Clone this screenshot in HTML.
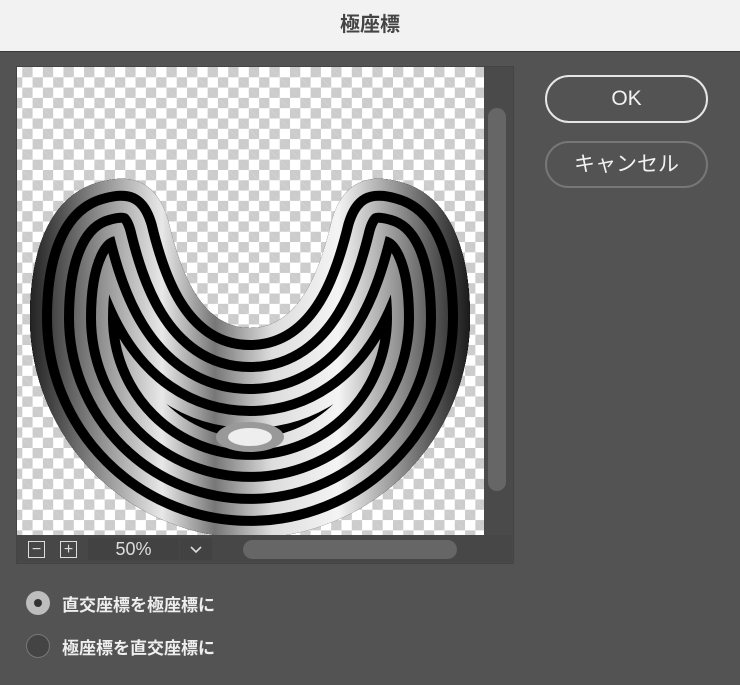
<!DOCTYPE html>
<html><head><meta charset="utf-8"><style>
body{margin:0;width:740px;height:685px;background:#535353;overflow:hidden;font-family:"Liberation Sans","Noto Sans CJK JP",sans-serif;position:relative}
.title{position:absolute;left:0;top:0;width:740px;height:51px;background:#f3f2f2;border-bottom:1px solid #3a3a3a;text-align:center;line-height:50px;font-size:20px;font-weight:bold;color:#444}
.panel{position:absolute;left:16px;top:66px;width:496px;height:496px;border:1px solid #444;background:#4a4a4a}
.img{position:absolute;left:17px;top:67px;width:467px;height:468px;overflow:hidden;
background-color:#fff;background-image:linear-gradient(45deg,#ccc 25%,transparent 25%,transparent 75%,#ccc 75%),linear-gradient(45deg,#ccc 25%,transparent 25%,transparent 75%,#ccc 75%);background-size:20.6px 20.6px;background-position:-5px 0,5.3px 10.3px}
.vs{position:absolute;left:488px;top:108px;width:18px;height:383px;border-radius:9px;background:#666}
.bar{position:absolute;left:17px;top:535px;width:495px;height:27px;background:#474747}
.bx{position:absolute;top:541px;width:17px;height:17px;border:1.5px solid #ddd;color:#ddd;font-size:16px;line-height:16px;text-align:center;box-sizing:border-box}
.pct{position:absolute;left:88px;top:538px;width:91px;height:22px;background:#424242;color:#ddd;font-size:18px;line-height:22px;text-align:center}
.dd{position:absolute;left:180px;top:538px;width:32px;height:22px;background:#424242}
.hs{position:absolute;left:243px;top:540px;width:214px;height:19px;border-radius:10px;background:#666}
.btn{position:absolute;left:545px;width:163px;border-radius:24px;box-sizing:border-box;text-align:center;color:#f2f2f2;font-size:21px}
.rad{position:absolute;left:26px;width:24px;height:24px;border-radius:50%;box-sizing:border-box}
.lbl{position:absolute;left:62px;color:#eee;font-size:17px;font-weight:bold}
</style></head><body>
<div class="title">極座標</div>
<div class="panel"></div>
<div class="img">
<svg width="467" height="468" viewBox="17 67 467 468">
<defs>
<linearGradient id="g" x1="30" x2="470" y1="0" y2="0" gradientUnits="userSpaceOnUse">
<stop offset="0" stop-color="#222"/><stop offset="0.15" stop-color="#888"/><stop offset="0.3" stop-color="#e8e8e8"/><stop offset="0.42" stop-color="#777"/><stop offset="0.55" stop-color="#ddd"/><stop offset="0.7" stop-color="#f4f4f4"/><stop offset="0.85" stop-color="#888"/><stop offset="1" stop-color="#1a1a1a"/>
</linearGradient>
<path id="s" d="M30,318 A220,220 0 0 0 470,318 C470,250 450,195 400,182 C365,172 342,185 332,220 C320,270 300,328 250,328 C200,328 180,270 168,220 C158,185 135,172 100,182 C50,195 30,250 30,318 Z"/>
<clipPath id="c"><use href="#s"/></clipPath>
</defs>
<use href="#s" fill="#000"/>
<g clip-path="url(#c)" fill="none" stroke-linejoin="round">
<use href="#s" stroke="#000" stroke-width="220"/>
<use href="#s" stroke="url(#g)" stroke-width="200"/>
<use href="#s" stroke="#000" stroke-width="176"/>
<use href="#s" stroke="url(#g)" stroke-width="156"/>
<use href="#s" stroke="#000" stroke-width="132"/>
<use href="#s" stroke="url(#g)" stroke-width="112"/>
<use href="#s" stroke="#000" stroke-width="88"/>
<use href="#s" stroke="url(#g)" stroke-width="68"/>
<use href="#s" stroke="#000" stroke-width="44"/>
<use href="#s" stroke="url(#g)" stroke-width="24"/>
</g>
<ellipse cx="250" cy="437" rx="34" ry="15" fill="#999"/>
<ellipse cx="250" cy="437" rx="22" ry="9" fill="#eee"/>
</svg>
</div>
<div class="vs"></div>
<div class="bar"></div>
<div class="bx" style="left:28px">−</div>
<div class="bx" style="left:60px">+</div>
<div class="pct">50%</div>
<div class="dd"><svg width="32" height="22"><path d="M11 9 L16 14 L21 9" stroke="#ddd" stroke-width="1.6" fill="none"/></svg></div>
<div class="hs"></div>
<div class="btn" style="top:75px;height:48px;border:2px solid #e6e6e6;line-height:44px">OK</div>
<div class="btn" style="top:141px;height:47px;border:2px solid #777;line-height:43px">キャンセル</div>
<div class="rad" style="top:591px;background:#bdbdbd"><div style="position:absolute;left:8px;top:8px;width:8px;height:8px;border-radius:50%;background:#333"></div></div>
<div class="lbl" style="top:591px">直交座標を極座標に</div>
<div class="rad" style="top:634px;background:#444;border:1.5px solid #777"></div>
<div class="lbl" style="top:634px">極座標を直交座標に</div>
</body></html>
